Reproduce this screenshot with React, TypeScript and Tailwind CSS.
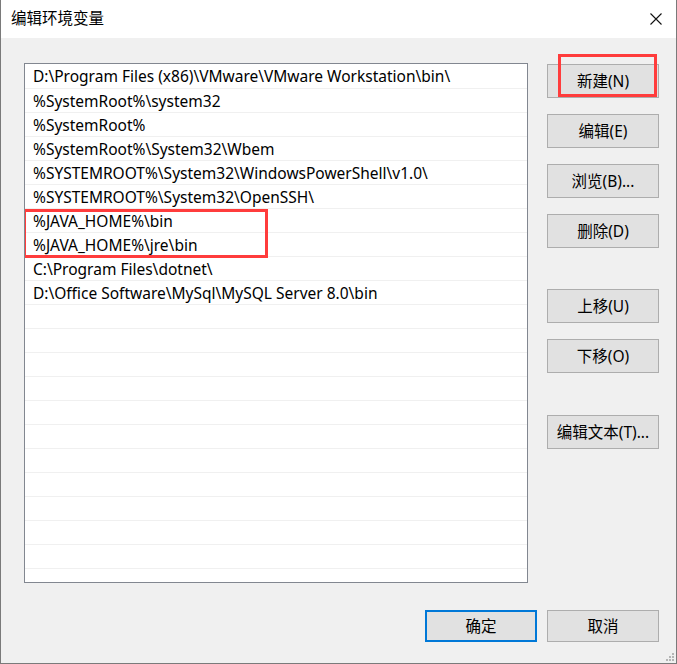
import React from "react";

const paths = [
  "D:\\Program Files (x86)\\VMware\\VMware Workstation\\bin\\",
  "%SystemRoot%\\system32",
  "%SystemRoot%",
  "%SystemRoot%\\System32\\Wbem",
  "%SYSTEMROOT%\\System32\\WindowsPowerShell\\v1.0\\",
  "%SYSTEMROOT%\\System32\\OpenSSH\\",
  "%JAVA_HOME%\\bin",
  "%JAVA_HOME%\\jre\\bin",
  "C:\\Program Files\\dotnet\\",
  "D:\\Office Software\\MySql\\MySQL Server 8.0\\bin",
];

const rows = [...paths, ...Array(12).fill("")];

const font = {
  fontFamily: '"Noto Sans", "Noto Sans CJK SC", sans-serif',
};

const WinButton = ({
  label,
  className = "",
  primary = false,
  children,
}: {
  label: string;
  className?: string;
  primary?: boolean;
  children?: React.ReactNode;
}) => (
  <div
    className={
      "relative w-[112px] flex items-center justify-center pt-[1px] bg-[#e1e1e1] text-[15.5px] text-black " +
      (primary ? "border-2 border-[#0078d7] " : "border border-[#adadad] ") +
      className
    }
  >
    {label}
    {children}
  </div>
);

export default function App() {
  return (
    <div
      className="w-[677px] h-[664px] flex flex-col bg-[#f0f0f0] border-x border-b border-[#7a7a7a] overflow-hidden"
      style={font}
    >
      <div className="h-[38px] bg-white flex items-center justify-between pl-[10px] pr-[14px]">
        <span className="text-[15.5px] text-black">编辑环境变量</span>
        <svg width="12" height="12" viewBox="0 0 12 12">
          <path d="M0.5 0.5 L11.5 11.5 M11.5 0.5 L0.5 11.5" stroke="#111" strokeWidth="1.1" />
        </svg>
      </div>

      <div className="flex-1 flex flex-col pl-[23px] pr-[17px] pt-[25px]">
        <div className="flex">
          <div className="relative w-[504px] h-[520px] bg-white border border-[#828790] overflow-hidden">
            {rows.map((text, i) => (
              <div
                key={i}
                className={
                  "h-[24px] flex items-center pl-[8px] pt-[2px] text-[15.5px] text-black whitespace-nowrap " +
                  (i > 0 ? "border-t border-[#f0f0f0]" : "")
                }
              >
                {text}
              </div>
            ))}
            <div className="absolute left-[-2px] top-[145px] w-[245px] h-[49px] border-[3px] border-[#ff3c3c]" />
          </div>

          <div className="flex flex-col ml-[19px] mt-[1px]">
            <WinButton label="新建(N)" className="h-[34px]">
              <div className="absolute left-[10px] top-[-11px] w-[99px] h-[43px] border-[3px] border-[#ff3c3c]" />
            </WinButton>
            <WinButton label="编辑(E)" className="h-[34px] mt-[16px]" />
            <WinButton label="浏览(B)..." className="h-[34px] mt-[16px]" />
            <WinButton label="删除(D)" className="h-[34px] mt-[16px]" />
            <WinButton label="上移(U)" className="h-[34px] mt-[41px]" />
            <WinButton label="下移(O)" className="h-[34px] mt-[16px]" />
            <WinButton label="编辑文本(T)..." className="h-[34px] mt-[42px]" />
          </div>
        </div>

        <div className="flex justify-end gap-[10px] mt-[27px]">
          <WinButton label="确定" primary className="h-[32px]" />
          <WinButton label="取消" className="h-[32px]" />
        </div>
      </div>

      <div className="relative h-0">
        <div className="absolute right-[2px] bottom-[2px] grid grid-cols-3 gap-[1px] w-[8px]">
          <span />
          <span />
          <span className="w-[2px] h-[2px] bg-[#b5b5b5]" />
          <span />
          <span className="w-[2px] h-[2px] bg-[#b5b5b5]" />
          <span className="w-[2px] h-[2px] bg-[#b5b5b5]" />
          <span className="w-[2px] h-[2px] bg-[#b5b5b5]" />
          <span className="w-[2px] h-[2px] bg-[#b5b5b5]" />
          <span className="w-[2px] h-[2px] bg-[#b5b5b5]" />
        </div>
      </div>
    </div>
  );
}
